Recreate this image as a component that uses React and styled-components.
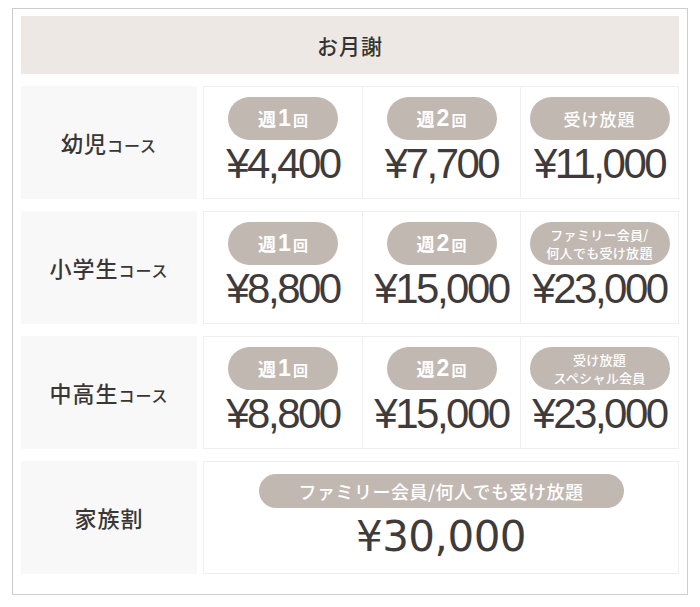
import styled, { createGlobalStyle } from 'styled-components'

const rows = [
  {
    name: '幼児',
    suffix: 'コース',
    plans: [
      { count: '1', price: '¥4,400' },
      { count: '2', price: '¥7,700' },
      { lines: ['受け放題'], price: '¥11,000' },
    ],
  },
  {
    name: '小学生',
    suffix: 'コース',
    plans: [
      { count: '1', price: '¥8,800' },
      { count: '2', price: '¥15,000' },
      { lines: ['ファミリー会員/', '何人でも受け放題'], price: '¥23,000' },
    ],
  },
  {
    name: '中高生',
    suffix: 'コース',
    plans: [
      { count: '1', price: '¥8,800' },
      { count: '2', price: '¥15,000' },
      { lines: ['受け放題', 'スペシャル会員'], price: '¥23,000' },
    ],
  },
]

const App = () => {
  return (
    <>
      <GlobalStyle />
      <Frame>
        <Header>お月謝</Header>
        {rows.map((row) => (
          <Row key={row.name}>
            <LabelCell>
              {row.name}
              <Suffix>{row.suffix}</Suffix>
            </LabelCell>
            <PriceGroup $cols={3}>
              {row.plans.map((plan, i) => (
                <PriceCell key={i}>
                  {plan.count ? (
                    <Pill $width={110}>
                      <PillKanji>週</PillKanji>
                      <PillNum>{plan.count}</PillNum>
                      <PillSmall>回</PillSmall>
                    </Pill>
                  ) : (
                    <Pill $width={140}>
                      <PillLines $multi={plan.lines.length > 1}>
                        {plan.lines.map((l) => (
                          <span key={l}>{l}</span>
                        ))}
                      </PillLines>
                    </Pill>
                  )}
                  <Price>{plan.price}</Price>
                </PriceCell>
              ))}
            </PriceGroup>
          </Row>
        ))}
        <Row>
          <LabelCell>家族割</LabelCell>
          <PriceGroup $cols={1}>
            <PriceCell $gap={5}>
              <Pill $width={365} $height={34} $wide>
                ファミリー会員/何人でも受け放題
              </Pill>
              <Price $wide>¥30,000</Price>
            </PriceCell>
          </PriceGroup>
        </Row>
      </Frame>
    </>
  )
}

const GlobalStyle = createGlobalStyle`
  body {
    margin: 0;
    background: #fff;
    font-family: "Noto Sans CJK JP", "Noto Sans", sans-serif;
    color: #3f3b3a;
  }
`

const Frame = styled.section`
  box-sizing: border-box;
  width: 676px;
  margin: 8px 0 0 12px;
  padding: 7px 8px 20px 8px;
  border: 1px solid #cfcccc;
  display: flex;
  flex-direction: column;
  gap: 12px;
`

const Header = styled.div`
  height: 58px;
  background: #ede8e4;
  display: flex;
  align-items: center;
  justify-content: center;
  font-size: 21px;
  font-weight: 500;
  letter-spacing: 1px;
  color: #333;
`

const Row = styled.div`
  display: grid;
  grid-template-columns: 176px 1fr;
  column-gap: 6px;
  height: 113px;
`

const LabelCell = styled.div`
  background: #f8f8f8;
  display: flex;
  align-items: baseline;
  justify-content: center;
  padding-top: 40px;
  box-sizing: border-box;
  font-size: 22px;
  font-weight: 500;
  letter-spacing: 1px;
  color: #3a3636;
`

const Suffix = styled.span`
  font-size: 16px;
  letter-spacing: 1px;
`

const PriceGroup = styled.div`
  display: grid;
  grid-template-columns: repeat(${({ $cols }) => $cols}, 1fr);
  border: 1px solid #efefef;
  background: #fff;
`

const PriceCell = styled.div`
  display: flex;
  flex-direction: column;
  align-items: center;
  justify-content: center;
  gap: ${({ $gap }) => $gap || 0}px;

  & + & {
    border-left: 1px solid #efefef;
  }
`

const Pill = styled.div`
  box-sizing: border-box;
  width: ${({ $width }) => $width}px;
  height: ${({ $height }) => $height || 43}px;
  border-radius: 22px;
  background: #c1b8b2;
  color: #fff;
  display: flex;
  align-items: baseline;
  justify-content: center;
  font-size: ${({ $wide }) => ($wide ? 18 : 17)}px;
  font-weight: 500;
  letter-spacing: ${({ $wide }) => ($wide ? 0.5 : 0)}px;
  line-height: ${({ $height }) => $height || 43}px;
`

const PillKanji = styled.span`
  font-size: 18px;
  font-weight: 700;
`

const PillNum = styled.span`
  font-family: "Liberation Sans", sans-serif;
  font-size: 23px;
  font-weight: 700;
  margin: 0 2px;
`

const PillSmall = styled.span`
  font-size: 15px;
  font-weight: 700;
`

const PillLines = styled.span`
  align-self: center;
  display: flex;
  flex-direction: column;
  align-items: center;
  font-size: ${({ $multi }) => ($multi ? 13 : 17)}px;
  line-height: ${({ $multi }) => ($multi ? '18px' : '43px')};
  letter-spacing: ${({ $multi }) => ($multi ? 0.3 : 1)}px;
`

const Price = styled.div`
  font-family: ${({ $wide }) => ($wide ? '"DejaVu Sans"' : '"Liberation Sans"')}, sans-serif;
  font-size: 42px;
  line-height: 48px;
  letter-spacing: ${({ $wide }) => ($wide ? -0.5 : -2.5)}px;
  color: #3f3b3a;
`

export default App
